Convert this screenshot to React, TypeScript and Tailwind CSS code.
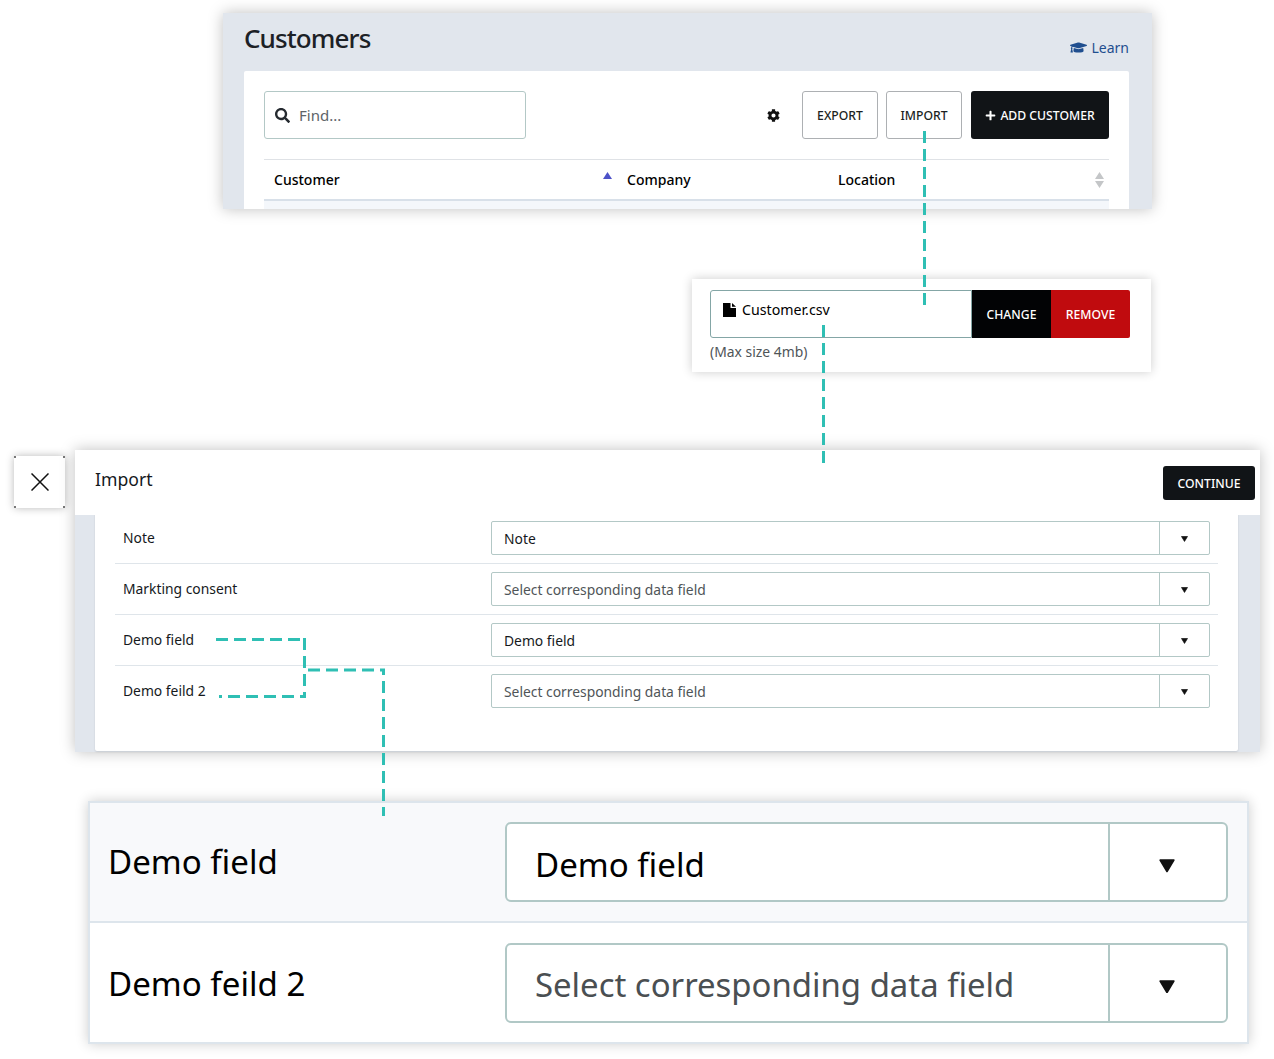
import React from "react";
import { FaCog, FaGraduationCap, FaPlus, FaSearch } from "react-icons/fa";

const font = { fontFamily: '"Noto Sans", sans-serif' };

function Caret({ size, cls }: { size: number; cls?: string }) {
  return (
    <svg width={size} height={size * 0.85} viewBox="0 0 10 8.5" className={`block ${cls ?? ""}`}>
      <path d="M0.7 0.7 H9.3 L5 7.8 Z" fill="#111" stroke="#111" strokeWidth="1" strokeLinejoin="round" />
    </svg>
  );
}

function SmallRow({ label, value, placeholder, last }: { label: string; value: string; placeholder?: boolean; last?: boolean }) {
  return (
    <div className={`flex items-center pl-2 pr-2 ${last ? "h-[50px]" : "h-[51px] border-b border-[#dfe5ea]"}`}>
      <div className="w-[368px] shrink-0 text-[13.85px] text-[#15191c]">{label}</div>
      <div className="flex-1 h-[34px] flex border border-[#b3c8c6] rounded-[2px] bg-white">
        <div className={`flex-1 flex items-center pl-3 pt-[2px] text-[13.85px] ${placeholder ? "text-[#4f5558]" : "text-[#15191c]"}`}>{value}</div>
        <div className="w-[50px] flex items-center justify-center border-l border-[#b3c8c6]">
          <Caret size={7} cls="mt-[2px]" />
        </div>
      </div>
    </div>
  );
}

function BigRow({ label, value, placeholder, shaded }: { label: string; value: string; placeholder?: boolean; shaded?: boolean }) {
  return (
    <div className={`flex items-center pl-[18px] pr-[19px] ${shaded ? "h-[120px] bg-[#f8f9fb] border-b-2 border-[#dde5ec]" : "h-[119px] bg-white"}`}>
      <div className={`w-[397px] shrink-0 text-[33.1px] text-black ${shaded ? "-mt-[1px]" : "mt-[3px]"}`}>{label}</div>
      <div className="flex-1 h-[80px] flex border-2 border-[#b1c8c6] rounded-[6px] bg-white">
        <div className={`flex-1 flex items-center pl-[28px] pt-[5px] ${placeholder ? "text-[32.9px] text-[#4a4f52]" : "text-[33.1px] text-black"}`}>{value}</div>
        <div className="w-[118px] flex items-center justify-center border-l-2 border-[#b1c8c6]">
          <Caret size={16} cls="mt-[8px] mr-[2px] blur-[0.5px]" />
        </div>
      </div>
    </div>
  );
}

export default function App() {
  return (
    <div className="relative w-[1274px] h-[1059px] bg-white overflow-hidden" style={font}>
      {/* Customers window */}
      <div className="absolute left-[223px] top-[13px] w-[929px] h-[196px] bg-[#e1e6ed] shadow-[0_0_14px_rgba(0,0,0,0.25)] flex flex-col pl-[21px] pr-[23px] overflow-hidden">
        <div className="h-[58px] shrink-0 flex justify-between">
          <div className="text-[26px] font-medium tracking-[-0.9px] text-[#1c2126] leading-[36px] pt-[7px]">Customers</div>
          <div className="flex items-center gap-[4px] h-[20px] mt-[24px] text-[14px] text-[#1f4e8f]">
            <FaGraduationCap className="text-[17px]" />
            <span>Learn</span>
          </div>
        </div>
        <div className="flex-1 bg-white rounded-t-[2px] px-5 pt-5">
          <div className="flex items-center h-[48px]">
            <div className="w-[262px] h-[48px] border border-[#b3c8c6] rounded-[3px] flex items-center pl-[10px] gap-[9px] text-[15px] text-[#5e6468]">
              <FaSearch className="text-[15px] text-[#252a30]" />
              <span>Find...</span>
            </div>
            <div className="flex-1 flex justify-end pr-[22px]">
              <FaCog className="text-[13px] text-[#111]" />
            </div>
            <button className="w-[76px] h-[48px] pt-[3px] border border-[#adb0b3] rounded-[3px] text-[12.2px] font-medium text-[#1b1f22]">EXPORT</button>
            <button className="w-[76px] h-[48px] pt-[3px] ml-2 border border-[#adb0b3] rounded-[3px] text-[12.2px] font-medium text-[#1b1f22]">IMPORT</button>
            <button className="w-[138px] h-[48px] pt-[3px] ml-[9px] bg-[#111417] rounded-[3px] text-[12.2px] font-medium text-white flex items-center justify-center gap-[4px]">
              <FaPlus className="text-[11px] -mt-[2px]" />
              <span>ADD CUSTOMER</span>
            </button>
          </div>
          <div className="mt-5 border-t border-[#dfe2e6] h-[40px] flex items-center pl-[10px] text-[14px] font-medium text-black">
            <div className="w-[329px]">Customer</div>
            <svg width="9" height="8" viewBox="0 0 9 8" className="mb-[8px]">
              <path d="M4.5 0 L9 7 H0 Z" fill="#4d52c8" />
            </svg>
            <div className="ml-[15px] w-[211px]">Company</div>
            <div className="flex-1">Location</div>
            <svg width="9" height="16" viewBox="0 0 9 16" className="mr-[5px]">
              <path d="M4.5 0 L9 7 H0 Z M4.5 16 L9 9 H0 Z" fill="#c4c6c8" />
            </svg>
          </div>
          <div className="h-[10px] border-t-2 border-[#d8e0e9] bg-[#f4f7fb]" />
        </div>
      </div>

      {/* Upload window */}
      <div className="absolute left-[692px] top-[279px] w-[459px] h-[93px] bg-white shadow-[0_0_10px_rgba(0,0,0,0.2)] pl-[18px] pr-[21px] pt-[11px]">
        <div className="flex h-[48px]">
          <div className="flex-1 border border-[#84a6a6] rounded-l-[3px] flex gap-[6px] pl-[12px] pt-[9px] text-[14.2px] text-black leading-[20px]">
            <svg width="13" height="14" viewBox="0 0 13 14" className="mt-[3px]">
              <path d="M0 0 H7.5 V5 H13 V14 H0 Z M9 0 L13 3.8 H9 Z" fill="#000" />
            </svg>
            <span>Customer.csv</span>
          </div>
          <button className="w-[79px] pt-[3px] bg-[#020305] text-white text-[12.2px] font-medium">CHANGE</button>
          <button className="w-[79px] pt-[3px] bg-[#c00b0e] text-white text-[12.2px] font-medium rounded-r-[2px]">REMOVE</button>
        </div>
        <div className="text-[13.9px] text-[#4f5558] leading-[20px] mt-[4px]">(Max size 4mb)</div>
      </div>

      {/* Close button */}
      <button className="absolute left-[14px] top-[456px] w-[51px] h-[52px] bg-white rounded-[2px] shadow-[0_0_8px_rgba(0,0,0,0.28)] flex items-center justify-center">
        <svg width="18" height="18" viewBox="0 0 18 18">
          <path d="M0.5 0.5 L17.5 17.5 M17.5 0.5 L0.5 17.5" stroke="#111" strokeWidth="1.5" fill="none" />
        </svg>
        <span className="absolute left-0 top-0 w-[2px] h-[2px] bg-[#777]" />
        <span className="absolute right-0 top-0 w-[2px] h-[2px] bg-[#777]" />
        <span className="absolute left-0 bottom-0 w-[2px] h-[2px] bg-[#777]" />
        <span className="absolute right-0 bottom-0 w-[2px] h-[2px] bg-[#777]" />
      </button>

      {/* Import window */}
      <div className="absolute left-[75px] top-[450px] w-[1185px] h-[302px] bg-[#e1e6ed] shadow-[0_0_14px_rgba(0,0,0,0.25)] flex flex-col">
        <div className="relative z-10 h-[65px] shrink-0 bg-white flex justify-between pl-5 pr-[5px]">
          <div className="text-[17.6px] text-[#15191c] leading-[26px] pt-[16px]">Import</div>
          <button className="w-[92px] h-[34px] mt-[16px] pt-[3px] bg-[#111417] rounded-[3px] text-white text-[12.2px] font-medium">CONTINUE</button>
        </div>
        <div className="w-[1143px] h-[238px] ml-5 bg-white rounded-b-[2px] shadow-[0_1px_2px_rgba(0,0,0,0.12)] px-5 -mt-[2px]">
          <SmallRow label="Note" value="Note" />
          <SmallRow label="Markting consent" value="Select corresponding data field" placeholder />
          <SmallRow label="Demo field" value="Demo field" />
          <SmallRow label="Demo feild 2" value="Select corresponding data field" placeholder last />
        </div>
      </div>

      {/* Zoomed rows */}
      <div className="absolute left-[88px] top-[801px] w-[1161px] h-[243px] border-2 border-[#dde5ec] bg-white shadow-[0_0_12px_rgba(0,0,0,0.2)]">
        <BigRow label="Demo field" value="Demo field" shaded />
        <BigRow label="Demo feild 2" value="Select corresponding data field" placeholder />
      </div>

      {/* Connector lines */}
      <svg className="absolute z-20 left-0 top-0 pointer-events-none" width="1274" height="1059" fill="none" stroke="#2fbfb4" strokeWidth="3" strokeDasharray="12 6">
        <path d="M924.5 131 V306" />
        <path d="M823.5 325 V463" />
        <path d="M216 639.5 H306" />
        <path d="M304.5 638 V698" />
        <path d="M306 696.5 H219" strokeDashoffset="6" />
        <path d="M308 670 H385" />
        <path d="M383.5 669 V816" strokeDashoffset="6" />
      </svg>
    </div>
  );
}
